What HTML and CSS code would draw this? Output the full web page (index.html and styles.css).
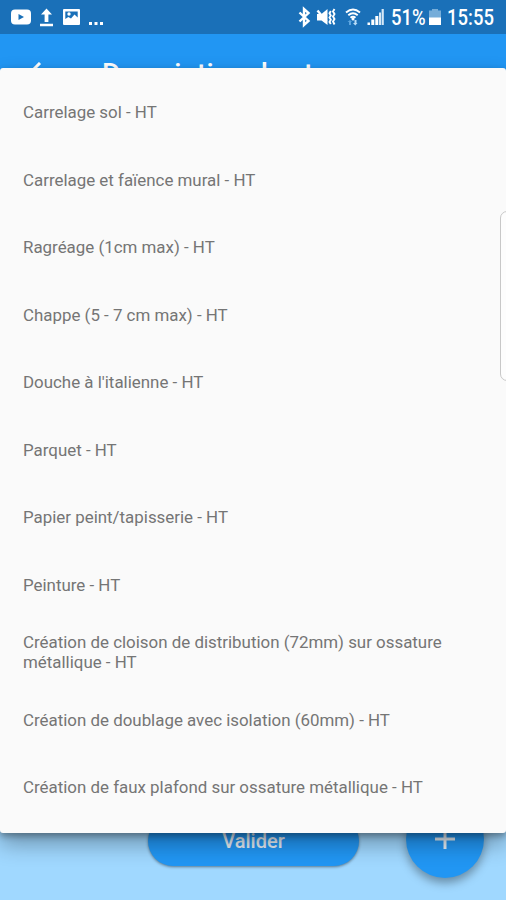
FILE: index.html
```html
<!DOCTYPE html>
<html lang="fr">

<head>
    <meta charset="utf-8">
    <title>Description des travaux</title>
    <link rel="stylesheet" href="styles.css">
</head>

<body>
<div class="screen">
    <div class="status-bar">
        <svg class="status-left" width="110" height="34" viewBox="0 0 110 34">
            <rect x="11" y="9.5" width="20" height="15" rx="4" fill="#fff"/>
            <path d="M18.500 14v6l5.500-3z" fill="#1a70b8"/>
            <path d="M46.500 8.500l5.500 6h-3.600v7.500h-3.800v-7.500H41zM40 23.800h13v2.400H40z" fill="#fff"/>
            <path fill-rule="evenodd" d="M64 9h15a1 1 0 0 1 1 1v14a1 1 0 0 1-1 1H64a1 1 0 0 1-1-1V10a1 1 0 0 1 1-1zm1.300 2.500v7.500l3-2 2.700 1.500 3.500-4 3.200 3v-6z" fill="#fff"/>
            <circle cx="69" cy="14" r="1.700" fill="#fff"/>
            <path d="M89 22h3v3h-3zM94.500 22h3v3h-3zM100 22h3v3h-3z" fill="#fff"/>
        </svg>
        <div class="status-right">
            <svg width="88" height="34" viewBox="298 0 88 34">
                <path d="M299.500 12.500l9 8.500-4.500 4V9l4.500 4-9 8.500" fill="none" stroke="#fff" stroke-width="2.400"/>
                <path d="M317 14h4.500l6-5v16l-6-4.500H317z" fill="#fff"/>
                <path d="M317.500 10.500l9 11" stroke="#fff" stroke-width="2.400"/>
                <path d="M330.800 11l-1.300 2.200 1.300 2.200-1.300 2.200 1.300 2.200-1.300 2.200 1.300 2M334.500 9l-1.500 2.500 1.500 2.500-1.500 2.500 1.500 2.500-1.500 2.500 1.500 3" fill="none" stroke="#fff" stroke-width="1.900"/>
                <path d="M346 12.500q7-6 14 0M348.300 15.300q4.700-4 9.400 0M350.500 17.800q2.500-2.200 5 0" fill="none" stroke="#fff" stroke-width="1.900"/>
                <circle cx="353" cy="19" r="1.500" fill="#fff"/>
                <path d="M349 25v-3h-1.500l2.500-2 2 2h-1v3z" fill="#5da5df"/>
                <path d="M354.500 20v3H353l2.300 2.500 2.200-2.500h-1v-3z" fill="#b8dcf7"/>
                <path d="M367.500 22.500h2.500V25h-2.500zM371.300 19.500h3V25h-3zM375.300 16h3v9h-3z" fill="#fff"/>
                <path d="M379 12.500h2V25h-2zM381.600 9h2.200v16h-2.200z" fill="#d5e8f7"/>
            </svg>
            <span class="percent">51%</span>
            <svg class="battery" width="12" height="18" viewBox="0 0 12 18">
                <path d="M3 1h6v1.500h3V10H0V2.500h3z" fill="#76add9"/>
                <path d="M0 9.500h12V17H0z" fill="#fff"/>
            </svg>
            <span class="clock">15:55</span>
        </div>
    </div>

    <div class="app-bar">
        <svg class="back" width="24" height="24" viewBox="0 0 24 24">
            <path d="M13 1L2 12l11 11M2 12h21" fill="none" stroke="#fff" stroke-width="3"/>
        </svg>
        <h1 class="title">Description des travaux</h1>
    </div>

    <div class="page"></div>

    <div class="actions">
        <button class="submit" type="button">Valider</button>
        <button class="add" type="button">
            <svg width="20" height="20" viewBox="0 0 20 20">
                <path d="M10 0v20M0 10h20" stroke="#e4edf5" stroke-width="3"/>
            </svg>
        </button>
    </div>

    <div class="menu">
        <ul class="menu-list">
            <li>Carrelage sol - HT</li>
            <li>Carrelage et faïence mural - HT</li>
            <li>Ragréage (1cm max) - HT</li>
            <li>Chappe (5 - 7 cm max) - HT</li>
            <li>Douche à l'italienne - HT</li>
            <li>Parquet - HT</li>
            <li>Papier peint/tapisserie - HT</li>
            <li>Peinture - HT</li>
            <li>Création de cloison de distribution (72mm) sur ossature métallique - HT</li>
            <li>Création de doublage avec isolation (60mm) - HT</li>
            <li>Création de faux plafond sur ossature métallique - HT</li>
        </ul>
        <div class="edge-handle"></div>
    </div>
</div>
</body>

</html>
```
FILE: styles.css
```css
* {
    box-sizing: border-box;
}

body {
    margin: 0;
    font-family: Roboto, "Liberation Sans", sans-serif;
}

.screen {
    position: relative;
    display: flex;
    flex-direction: column;
    width: 506px;
    height: 900px;
    overflow: hidden;
    background-color: #a0d8ff;
}

.status-bar {
    display: flex;
    justify-content: space-between;
    height: 34px;
    background-color: #1a70b8;
    color: #fff;
}

.status-right {
    display: flex;
    align-items: center;
    padding-right: 12px;
    font-size: 22px;
    font-weight: 500;
    line-height: 34px;
}

.percent,
.clock {
    padding-top: 2px;
    transform: scaleX(0.84);
    transform-origin: left;
}

.percent {
    width: 35px;
    margin-left: 5px;
}

.battery {
    margin: 0 6px 0 3px;
}

.clock {
    width: 47px;
}

.app-bar {
    display: flex;
    align-items: center;
    height: 79px;
    padding: 0 27px;
    background-color: #2196f3;
}

.back {
    margin-right: 51px;
}

.title {
    margin: 0;
    color: #fff;
    font-size: 28px;
    font-weight: 500;
    white-space: nowrap;
}

.page {
    flex: 1;
}

.actions {
    display: flex;
    align-items: center;
    justify-content: flex-end;
    gap: 47px;
    padding: 0 22px;
    margin-bottom: 22px;
}

.submit {
    width: 211px;
    height: 50px;
    margin-top: 4px;
    padding: 0;
    border: 0;
    border-radius: 25px;
    background-color: #2196f3;
    box-shadow: 0 1px 3px rgba(0, 0, 0, 0.45);
    color: #e4edf5;
    font-family: inherit;
    font-size: 20px;
    font-weight: 500;
}

.add {
    display: flex;
    align-items: center;
    justify-content: center;
    width: 78px;
    height: 78px;
    padding: 0;
    border: 0;
    border-radius: 50%;
    background-color: #2196f3;
    box-shadow: 0 5px 10px rgba(0, 0, 0, 0.35);
}

/* opened dropdown, covers the form below */
.menu {
    position: absolute;
    top: 68px;
    left: 0;
    width: 506px;
    height: 765px;
    padding: 10.7px 23px;
    border-radius: 3px;
    background-color: #fafafa;
    box-shadow: 0 11px 22px rgba(0, 0, 0, 0.32), 0 3px 6px rgba(0, 0, 0, 0.3);
}

.menu-list {
    margin: 0;
    padding: 0;
    list-style: none;
}

.menu-list li {
    display: flex;
    align-items: center;
    height: 67.5px;
    color: #757575;
    font-size: 16.9px;
    line-height: 20px;
}

.edge-handle {
    position: absolute;
    top: 143px;
    right: -8px;
    width: 14px;
    height: 170px;
    border: 1px solid #c8c8c8;
    border-radius: 7px;
    background-color: #fdfdfd;
}
```
